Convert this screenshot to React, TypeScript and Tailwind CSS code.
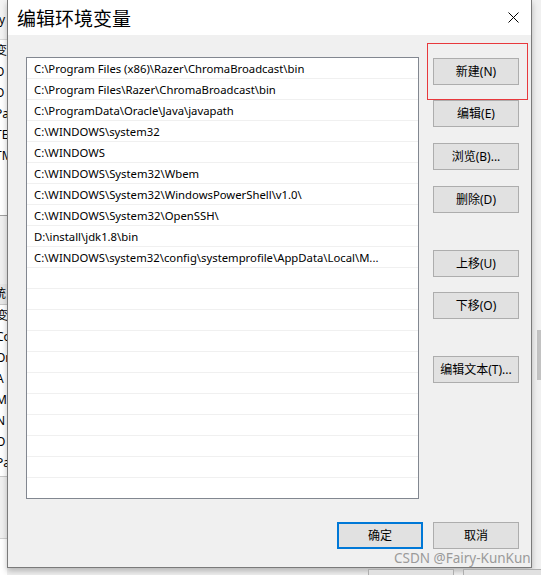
import React from "react";

const paths = [
  "C:\\Program Files (x86)\\Razer\\ChromaBroadcast\\bin",
  "C:\\Program Files\\Razer\\ChromaBroadcast\\bin",
  "C:\\ProgramData\\Oracle\\Java\\javapath",
  "C:\\WINDOWS\\system32",
  "C:\\WINDOWS",
  "C:\\WINDOWS\\System32\\Wbem",
  "C:\\WINDOWS\\System32\\WindowsPowerShell\\v1.0\\",
  "C:\\WINDOWS\\System32\\OpenSSH\\",
  "D:\\install\\jdk1.8\\bin",
  "C:\\WINDOWS\\system32\\config\\systemprofile\\AppData\\Local\\M...",
];

const rows = [...paths, ...Array(11).fill("")];

// fragments of the window behind the dialog
const behindTop = ["变", "O", "O", "Pa", "TE", "TM", "", ""];
const behindBottom = ["变", "Co", "Or", "A", "M", "N", "O", "Pa"];

const font = {
  fontFamily: '"Noto Sans", "Noto Sans CJK SC", sans-serif',
};

function Btn({ label, className = "" }: { label: string; className?: string }) {
  return (
    <div
      className={
        "flex h-[27px] w-[86px] items-center justify-center border-solid bg-[#e1e1e1] text-[12px] text-black " +
        className
      }
    >
      {label}
    </div>
  );
}

export default function App() {
  return (
    <div
      className="relative flex h-[575px] w-[541px] overflow-hidden bg-[#f0f0f0]"
      style={font}
    >
      {/* left strip: window behind */}
      <div className="flex w-[7px] shrink-0 flex-col overflow-hidden bg-white text-[12px] leading-none text-black">
        <div className="flex h-[40px] items-center border-b border-[#d9d9d9] bg-[#f3f3f3]">
          <span className="-ml-[6px] whitespace-nowrap">ry</span>
        </div>
        {behindTop.map((t, i) => (
          <div key={i} className="flex h-[21px] items-center whitespace-nowrap">
            <span className="-ml-[5px]">{t}</span>
          </div>
        ))}
        <div className="h-[8px] border-b border-[#a0a0a0]" />
        <div className="h-[68px] bg-[#f0f0f0]" />
        <div className="flex h-[21px] items-center whitespace-nowrap border-b border-[#c8c8c8] bg-[#e8e8e8]">
          <span className="-ml-[6px]">统</span>
        </div>
        {behindBottom.map((t, i) => (
          <div key={i} className="flex h-[21px] items-center whitespace-nowrap">
            <span className="-ml-[4px]">{t}</span>
          </div>
        ))}
        <div className="h-[4px] border-b border-[#c8c8c8]" />
        <div className="h-[62px] border-b border-[#d0d0d0] bg-[#f0f0f0]" />
      </div>

      {/* dialog */}
      <div className="relative flex h-[568px] w-[525px] shrink-0 flex-col border-b border-l border-r border-[#7a7a7a] bg-[#f0f0f0] shadow-[0_3px_6px_rgba(0,0,0,0.25)]">
        <div className="flex h-[35px] shrink-0 items-center justify-between bg-white pl-[9px] pr-[12px]">
          <span
            className="text-[19px] leading-none text-black"
            style={{ fontFamily: '"Noto Sans CJK SC", sans-serif' }}
          >
            编辑环境变量
          </span>
          <svg width="11" height="11" viewBox="0 0 11 11" className="mb-[1px]">
            <path d="M0.5 0.5 L10.5 10.5 M10.5 0.5 L0.5 10.5" stroke="#000" strokeWidth="1" />
          </svg>
        </div>

        <div className="flex pl-[18px] pt-[22px]">
          <div className="h-[442px] w-[393px] shrink-0 overflow-hidden border border-[#828790] bg-white">
            {rows.map((p, i) => (
              <div
                key={i}
                className="flex h-[21px] items-center overflow-hidden whitespace-nowrap border-b border-[#f0f0f0] pl-[7px] pt-[3px] text-[11.3px] text-black"
              >
                {p}
              </div>
            ))}
          </div>

          <div className="ml-[14px] flex flex-col pt-[1px]">
            <Btn label="新建(N)" className="border border-[#adadad]" />
            <Btn label="编辑(E)" className="mt-[15px] border border-[#adadad]" />
            <Btn label="浏览(B)..." className="mt-[16px] border border-[#adadad]" />
            <Btn label="删除(D)" className="mt-[16px] border border-[#adadad]" />
            <Btn label="上移(U)" className="mt-[37px] border border-[#adadad]" />
            <Btn label="下移(O)" className="mt-[15px] border border-[#adadad]" />
            <Btn label="编辑文本(T)..." className="mt-[37px] border border-[#adadad]" />
          </div>
        </div>

        <div className="mt-[23px] flex justify-end gap-[10px] pr-[12px]">
          <Btn label="确定" className="border-2 border-[#0078d7]" />
          <Btn label="取消" className="border border-[#adadad]" />
        </div>

        {/* annotation around 新建 */}
        <div className="pointer-events-none absolute left-[419px] top-[43px] h-[57px] w-[101px] border border-solid border-[#e8393d] text-[#e8393d]" />
      </div>

      {/* right strip */}
      <div className="flex flex-1 flex-col">
        <div className="h-[330px]" />
        <div className="ml-auto h-[50px] w-[4px] bg-[#c2c2c2]" />
      </div>

      {/* bottom strip: buttons of the window behind */}
      <div className="absolute bottom-0 left-[368px] h-[6px] w-[86px] border border-b-0 border-[#adadad] bg-[#e1e1e1]" />
      <div className="absolute bottom-0 left-[463px] h-[6px] w-[86px] border border-b-0 border-[#adadad] bg-[#e1e1e1]" />

      {/* watermark */}
      <div className="absolute left-[394px] top-[548px] text-[13.5px] text-[#9a9a9a]">
        CSDN @Fairy-KunKun
      </div>
    </div>
  );
}
